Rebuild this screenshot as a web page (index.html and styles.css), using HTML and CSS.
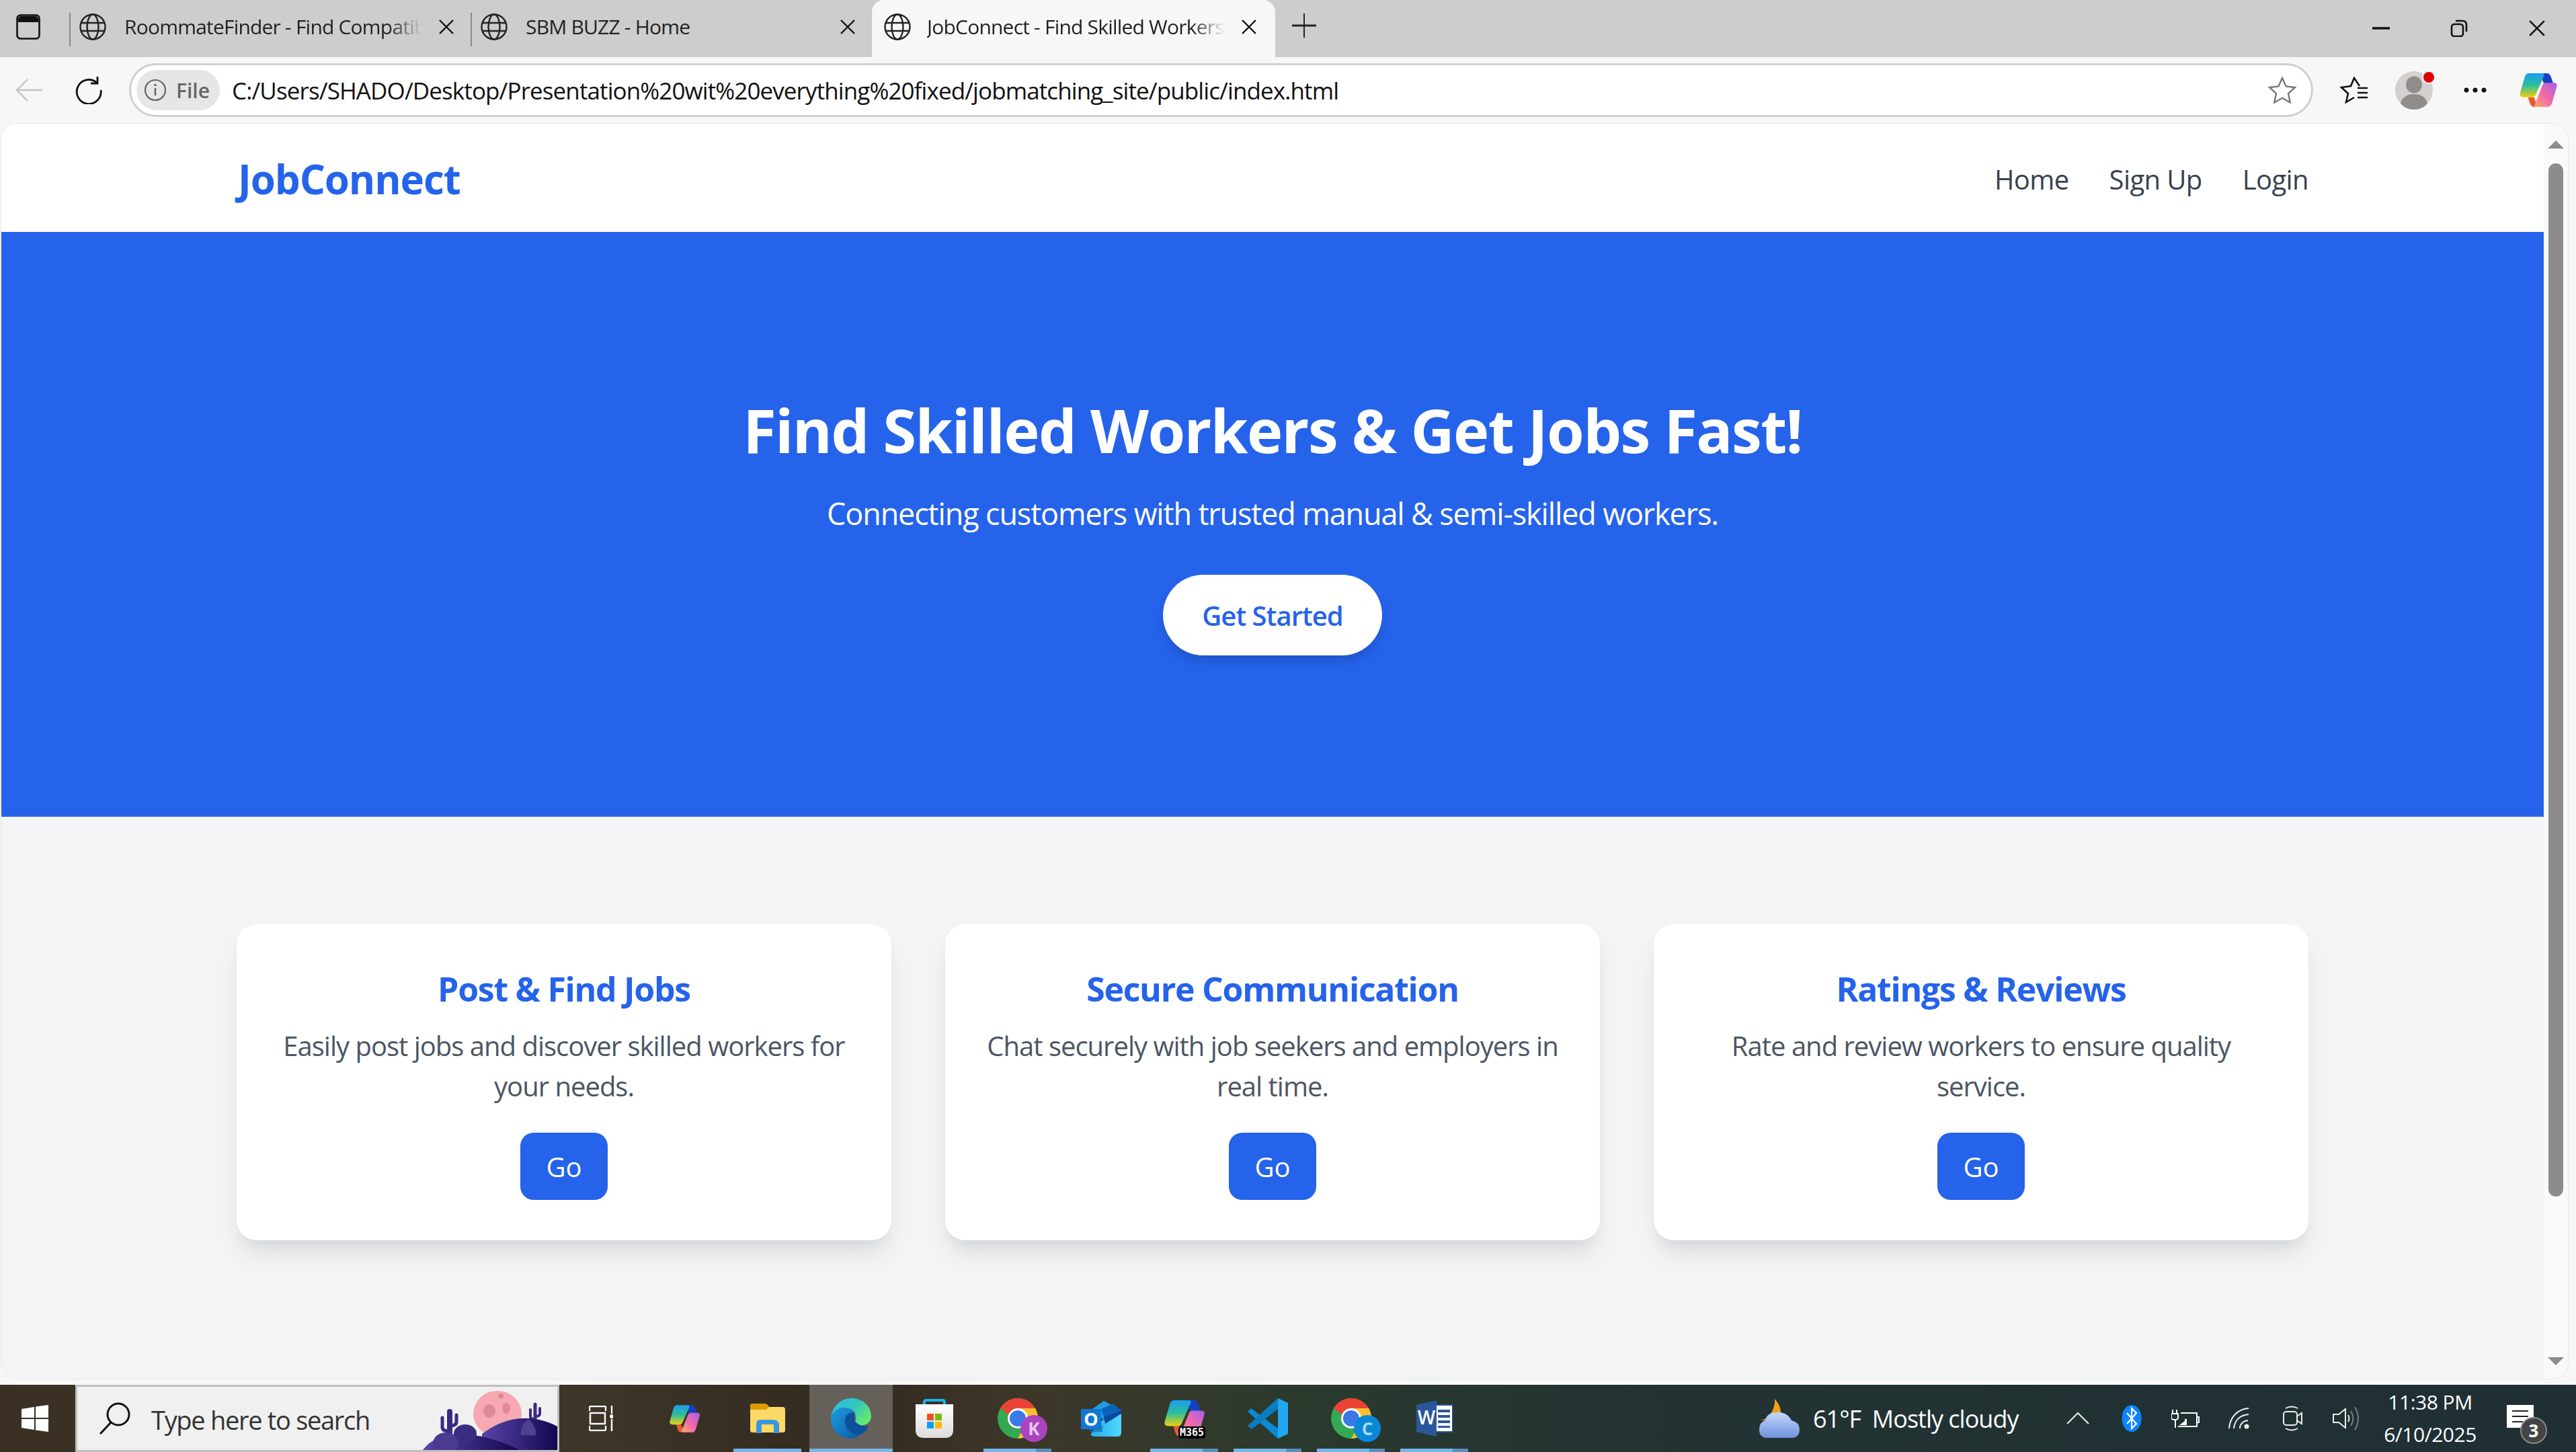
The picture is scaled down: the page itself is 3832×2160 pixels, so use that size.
FILE: index.html
```html
<!DOCTYPE html>
<html>
<head>
	<title>JobConnect - Find Skilled Workers</title>
	<meta charset="utf-8">
	<link rel="stylesheet" href="styles.css">
</head>
<body>

	<svg class="defs" width="0" height="0">
		<defs>
			<linearGradient id="cp-left" x1="0" y1="0" x2="0" y2="1">
				<stop offset="0" stop-color="#1a9cf2"/><stop offset=".5" stop-color="#2cbf9c"/><stop offset="1" stop-color="#f0d010"/>
			</linearGradient>
			<linearGradient id="cp-right" x1="1" y1="0" x2="0" y2="1">
				<stop offset="0" stop-color="#a85fe6"/><stop offset=".55" stop-color="#f26aa6"/><stop offset="1" stop-color="#ffab6b"/>
			</linearGradient>
			<linearGradient id="edge-top" x1="0" y1="0" x2="1" y2=".7">
				<stop offset="0" stop-color="#35c1f1"/><stop offset=".5" stop-color="#2fc4c0"/><stop offset="1" stop-color="#66eb6e"/>
			</linearGradient>
			<linearGradient id="edge-low" x1="0" y1="0" x2="1" y2="1">
				<stop offset="0" stop-color="#1b9de2"/><stop offset="1" stop-color="#0c59a4"/>
			</linearGradient>
			<linearGradient id="bag" x1="0" y1="0" x2="0" y2="1">
				<stop offset="0" stop-color="#ffffff"/><stop offset="1" stop-color="#dcdcdc"/>
			</linearGradient>
			<linearGradient id="ol-body" x1="0" y1="0" x2="1" y2="0">
				<stop offset="0" stop-color="#28a8ea"/><stop offset="1" stop-color="#50d9ff"/>
			</linearGradient>
			<linearGradient id="cloud" x1="0" y1="0" x2="0" y2="1">
				<stop offset="0" stop-color="#c4d8fb"/><stop offset="1" stop-color="#6f92dc"/>
			</linearGradient>
			<linearGradient id="hill" x1="0" y1="0" x2="1" y2="0">
				<stop offset="0" stop-color="#5a44a8"/><stop offset="1" stop-color="#120650"/>
			</linearGradient>

			<symbol id="globe" viewBox="0 0 40 40">
				<g fill="none" stroke="#222" stroke-width="2.4">
					<circle cx="20" cy="20" r="18.5"/>
					<ellipse cx="20" cy="20" rx="8.5" ry="18.5"/>
					<path d="M2 14h36M2 26h36"/>
				</g>
			</symbol>
			<symbol id="x" viewBox="0 0 24 24">
				<path d="M2 2l20 20M22 2L2 22" fill="none" stroke="#111" stroke-width="2.4"/>
			</symbol>
			<symbol id="copilot" viewBox="0 0 135 122">
				<path d="M72 0h26q10 0 15 12l9 26H88z" fill="#1440c4"/>
				<path d="M30 87h22l12 35H52q-10 0-15-12z" fill="#ea5a35"/>
				<path d="M34 0h48q10 0 6 10L58 78q-4 9-14 9H14Q-2 87 1 72L18 14Q22 0 34 0z" fill="url(#cp-left)"/>
				<path d="M92 35h32q14 0 10 14l-17 59q-4 14-18 14H62q-12 0-6-12L82 44q4-9 10-9z" fill="url(#cp-right)"/>
			</symbol>
			<symbol id="chrome" viewBox="0 0 60 60">
				<circle cx="30" cy="30" r="30" fill="#34a853"/>
				<path d="M30 15h26a30 30 0 0 1-26 45l12-22z" fill="#fbc02d"/>
				<path d="M4 15a30 30 0 0 1 52 0H30a15 15 0 0 0-14 9z" fill="#ea4335"/>
				<circle cx="30" cy="30" r="15" fill="#fff"/>
				<circle cx="30" cy="30" r="12" fill="#3b78e7"/>
			</symbol>
		</defs>
	</svg>

	<!-- tab strip -->
	<div class="tabstrip">
		<div class="side-btn">
			<svg width="36" height="38" viewBox="0 0 36 38"><rect x="1.5" y="1.5" width="33" height="35" rx="5" fill="none" stroke="#111" stroke-width="2.6"/><path d="M3 8q0-5 5-5h20q5 0 5 5v4H3z" fill="#111"/></svg>
		</div>
		<div class="tab tab-sep">
			<svg class="globe"><use href="#globe"/></svg>
			<span class="tab-title fade">RoommateFinder - Find Compatib</span>
			<svg class="tab-x"><use href="#x"/></svg>
		</div>
		<div class="tab tab-sep">
			<svg class="globe"><use href="#globe"/></svg>
			<span class="tab-title">SBM BUZZ - Home</span>
			<svg class="tab-x"><use href="#x"/></svg>
		</div>
		<div class="tab tab-active">
			<svg class="globe"><use href="#globe"/></svg>
			<span class="tab-title fade">JobConnect - Find Skilled Workers</span>
			<svg class="tab-x"><use href="#x"/></svg>
		</div>
		<div class="new-tab">
			<svg width="36" height="36" viewBox="0 0 36 36"><path d="M18 0v36" stroke="#222" stroke-width="2"/><path d="M0 18h36" stroke="#222" stroke-width="3"/></svg>
		</div>
		<div class="win-btns">
			<div><svg width="26" height="6" viewBox="0 0 26 6"><path d="M0 3h26" stroke="#111" stroke-width="3.5"/></svg></div>
			<div><svg width="26" height="26" viewBox="0 0 26 26" fill="none" stroke="#111" stroke-width="2.6"><rect x="2" y="7" width="17" height="18" rx="4"/><path d="M8 2h10q6 0 6 6v10"/></svg></div>
			<div><svg width="26" height="26" viewBox="0 0 24 24"><use href="#x"/></svg></div>
		</div>
	</div>

	<!-- address bar row -->
	<div class="toolbar">
		<div class="tool tool-back">
			<svg width="40" height="34" viewBox="0 0 40 34" fill="none" stroke="#c4c4c4" stroke-width="2.4"><path d="M40 17H2M18 1L2 17l16 16"/></svg>
		</div>
		<div class="tool tool-reload">
			<svg width="42" height="42" viewBox="0 0 42 42" fill="none" stroke="#111" stroke-width="2.8"><path d="M33 10A18 18 0 1 0 39 21"/><path d="M34 1v10H24"/></svg>
		</div>
		<div class="addr">
			<div class="chip">
				<svg width="34" height="34" viewBox="0 0 34 34"><circle cx="17" cy="17" r="15" fill="none" stroke="#666" stroke-width="2.2"/><path d="M17 14v11" stroke="#666" stroke-width="2.6"/><circle cx="17" cy="9.5" r="1.8" fill="#666"/></svg>
				<span>File</span>
			</div>
			<span class="url">C:/Users/SHADO/Desktop/Presentation%20wit%20everything%20fixed/jobmatching_site/public/index.html</span>
			<svg class="star" width="42" height="40" viewBox="0 0 42 40"><path d="M21 2l5.6 12.4 13.4 1.6-10 9.200 2.800 13.300L21 31.800 9.200 38.500 12 25.200 2 16l13.400-1.600z" fill="none" stroke="#777" stroke-width="2.4"/></svg>
		</div>
		<div class="tool tool-right">
			<svg width="42" height="40" viewBox="0 0 42 40" fill="none" stroke="#111" stroke-width="2.6"><path d="M29 14L21 2l-5 12-14 2 10 9-3 13 12-7"/><path d="M26 17h15M26 24h15M26 31h15"/></svg>
		</div>
		<div class="tool tool-right">
			<svg width="62" height="60" viewBox="0 0 62 60"><circle cx="30" cy="30" r="28" fill="#d2d1cf"/><ellipse cx="30" cy="22" rx="12" ry="12.500" fill="#8f8c89"/><path d="M10 50c2-10 11-14 20-14s18 4 20 14c-5 6-12 9-20 9s-15-3-20-9z" fill="#8f8c89"/><circle cx="52" cy="11" r="10" fill="#f7f7f7"/><circle cx="52" cy="11" r="8" fill="#e00000"/></svg>
		</div>
		<div class="tool tool-right">
			<svg width="34" height="8" viewBox="0 0 34 8" fill="#111"><circle cx="4" cy="4" r="3.500"/><circle cx="17" cy="4" r="3.500"/><circle cx="30" cy="4" r="3.500"/></svg>
		</div>
		<div class="tool tool-right tool-last">
			<svg width="56" height="50"><use href="#copilot"/></svg>
		</div>
	</div>

	<!-- the page itself -->
	<div class="viewport-wrap">
		<div class="viewport">
			<div class="site">
				<nav class="nav">
					<a class="logo">JobConnect</a>
					<div class="nav-links">
						<a>Home</a>
						<a>Sign Up</a>
						<a>Login</a>
					</div>
				</nav>

				<section class="hero">
					<h1>Find Skilled Workers &amp; Get Jobs Fast!</h1>
					<p>Connecting customers with trusted manual &amp; semi-skilled workers.</p>
					<button class="btn-start">Get Started</button>
				</section>

				<section class="features">
					<div class="card">
						<h3>Post &amp; Find Jobs</h3>
						<p>Easily post jobs and discover skilled workers for your needs.</p>
						<button class="btn-go">Go</button>
					</div>
					<div class="card">
						<h3>Secure Communication</h3>
						<p>Chat securely with job seekers and employers in real time.</p>
						<button class="btn-go">Go</button>
					</div>
					<div class="card">
						<h3>Ratings &amp; Reviews</h3>
						<p>Rate and review workers to ensure quality service.</p>
						<button class="btn-go">Go</button>
					</div>
				</section>
			</div>

			<div class="scrollbar">
				<div class="arrow-up"></div>
				<div class="thumb"></div>
				<div class="arrow-down"></div>
			</div>
		</div>
	</div>

	<!-- windows taskbar -->
	<div class="taskbar">
		<div class="start">
			<svg width="40" height="40" viewBox="0 0 40 40" fill="#fff"><path d="M0 6l19-3v16H0zM21 2.600L40 0v19H21zM0 21h19v16L0 34zM21 21h19v19l-19-2.600z"/></svg>
		</div>
		<div class="search">
			<svg class="search-glass" width="50" height="50" viewBox="0 0 50 50" fill="none" stroke="#111" stroke-width="3"><circle cx="30" cy="19" r="16"/><path d="M19 31L3 48"/></svg>
			<span>Type here to search</span>
			<svg class="doodle" width="200" height="94" viewBox="0 0 200 94">
				<ellipse cx="111" cy="40" rx="36" ry="34" fill="#f6a9b2"/>
				<ellipse cx="99" cy="36" rx="9" ry="10" fill="#e08a96"/>
				<ellipse cx="124" cy="32" rx="6" ry="8" fill="#e08a96"/>
				<ellipse cx="116" cy="14" rx="4" ry="4" fill="#e08a96"/>
				<ellipse cx="116" cy="60" rx="5" ry="5" fill="#e08a96"/>
				<g fill="none" stroke="#3c2a84" stroke-linecap="round">
					<path d="M40 37v40" stroke-width="8"/>
					<path d="M29 46v14q0 6 11 6M50 42v10q0 6-10 6" stroke-width="5"/>
					<path d="M167 26v32" stroke-width="5"/>
					<path d="M160 34v10q0 4 7 4M174 32v8q0 4-7 4" stroke-width="4"/>
				</g>
				<path d="M88 70q34-26 72-23 22 2 40 12v35H88z" fill="url(#hill)"/>
				<path d="M0 94q18-24 56-24 44 2 88 24z" fill="url(#hill)"/>
				<ellipse cx="63" cy="70" rx="17" ry="14" fill="#3a2c80"/>
				<ellipse cx="34" cy="84" rx="19" ry="16" fill="#4a3a90"/>
				<path d="M157 48q12 10 11 24h-22q-2-14 11-24z" fill="#4c4290"/>
			</svg>
		</div>

		<div class="slot"><svg width="36" height="38" viewBox="0 0 36 38" fill="none" stroke="#fff" stroke-width="2.400"><path d="M1 1h24M1 1v7M25 1v7M1 37h24M1 30v7M25 30v7"/><rect x="2" y="11" width="22" height="16"/><path d="M34 0v12M34 20v18"/><circle cx="34" cy="16" r="3" fill="#fff" stroke="none"/></svg></div>
		<div class="slot"><svg width="45" height="41"><use href="#copilot"/></svg></div>
		<div class="slot running">
			<svg width="52" height="44" viewBox="0 0 52 44">
				<path d="M0 4q0-4 4-4h17q4 0 7 5h20q4 0 4 4v31q0 3-4 3H4q-4 0-4-3z" fill="#ffd966"/>
				<path d="M0 9V4q0-4 4-4h17q4 0 7 5l-4 4z" fill="#dc9c00"/>
				<path d="M9 44V30q0-6 6-6h20q6 0 8 6v14h-8V31H17v13z" fill="#3b97dc"/>
			</svg>
		</div>
		<div class="slot active">
			<svg width="60" height="60" viewBox="0 0 60 60">
				<path d="M0 29C3 10 16 0 31 0c17 0 29 12 29 27 0 9-8 14-17 13-6-1-9-3-7-6 2-3 2-8-2-13C27 13 14 12 8 18c-4 3-7 7-8 11z" fill="url(#edge-top)"/>
				<path d="M0 29C3 18 12 13 22 14c8 1 13 5 14 8-9-2-16 4-15 14 1 13 14 20 23 18-4 4-9 6-15 6C12 60 0 46 0 29z" fill="url(#edge-low)"/>
				<path d="M21 36c-1-10 6-16 15-14-1 3-2 6 0 12 4 6 14 9 20 7-2 6-7 11-12 13-9 2-22-5-23-18z" fill="#0e4f9c"/>
			</svg>
		</div>
		<div class="slot">
			<svg width="58" height="58" viewBox="0 0 58 58">
				<path d="M14 13V5q0-3 3-3h24q3 0 3 3v8" fill="none" stroke="#1ab0f0" stroke-width="4"/>
				<path d="M1 8h56v38q0 12-12 12H13Q1 58 1 46z" fill="url(#bag)"/>
				<rect x="18" y="22" width="10" height="10" fill="#f25022"/><rect x="30" y="22" width="10" height="10" fill="#7fba00"/>
				<rect x="18" y="34" width="10" height="10" fill="#00a4ef"/><rect x="30" y="34" width="10" height="10" fill="#ffb900"/>
			</svg>
		</div>
		<div class="slot running split">
			<svg class="chrome" width="60" height="60"><use href="#chrome"/></svg>
			<span class="profile-badge badge-k">K</span>
		</div>
		<div class="slot">
			<svg width="60" height="53" viewBox="0 0 60 53">
				<path d="M14 50q2 3 6 3h34q6 0 6-6V14L30 30z" fill="url(#ol-body)"/>
				<path d="M14 14L34 0l26 14L36 30z" fill="#1f9fe0"/>
				<path d="M30 12l18-8 12 10-24 16z" fill="#0a63b8"/>
				<path d="M34 24l26-10v5L36 34z" fill="#0a4a9c"/>
				<path d="M8 36h24v10H14z" fill="#0d6cb8" opacity=".7"/>
				<rect x="0" y="12" width="30" height="30" rx="2" fill="#0f78d4"/>
				<text x="15" y="37" class="ol-o">O</text>
			</svg>
		</div>
		<div class="slot running split">
			<svg width="60" height="54"><use href="#copilot"/></svg>
			<span class="m365">M365</span>
		</div>
		<div class="slot running split">
			<svg width="60" height="60" viewBox="0 0 60 60">
				<path d="M0 20l5-5 40 30v15z" fill="#0a8ad6"/>
				<path d="M45 0v16L6 46l-6-5 12-11z" fill="#0a7cc4"/>
				<path d="M45 0l15 7v46l-15 7z" fill="#22a7f2"/>
			</svg>
		</div>
		<div class="slot running split">
			<svg class="chrome" width="60" height="60"><use href="#chrome"/></svg>
			<span class="profile-badge badge-c">C</span>
		</div>
		<div class="slot running split">
			<svg width="54" height="54" viewBox="0 0 54 54">
				<rect x="24" y="7" width="30" height="40" fill="#fff" stroke="#2b579a" stroke-width="2"/>
				<path d="M32 14h18v4H32zM32 22h18v4H32zM32 30h18v4H32zM32 38h18v3H32z" fill="#2b579a"/>
				<path d="M0 7L30 0v54L0 47z" fill="#2b579a"/>
				<text x="15" y="36" class="word-w">W</text>
			</svg>
		</div>

		<div class="tray">
			<div class="weather">
				<svg width="60" height="58" viewBox="0 0 60 58">
					<path d="M23 0c8 8 12 20 7 32H2c12-2 22-16 21-32z" fill="#f2a01e"/>
					<path d="M12 58Q0 58 0 45q0-10 9-13 2-12 19-12 14 0 20 12 12 3 12 13 0 13-12 13z" fill="url(#cloud)"/>
				</svg>
				<span>61°F&nbsp; Mostly cloudy</span>
			</div>
			<div class="tray-icon"><svg width="34" height="20" viewBox="0 0 34 20" fill="none" stroke="#eee" stroke-width="2"><path d="M1 18L17 2l16 16"/></svg></div>
			<div class="tray-icon">
				<svg width="30" height="40" viewBox="0 0 30 40"><ellipse cx="15" cy="20" rx="14.500" ry="20" fill="#0a84ff"/><path d="M8 12l14 16-7 7V5l7 7L8 28" fill="none" stroke="#fff" stroke-width="2.200"/></svg>
			</div>
			<div class="tray-icon">
				<svg width="42" height="30" viewBox="0 0 42 30" fill="none" stroke="#fff" stroke-width="2"><path d="M2 2v5M8 2v5M0 8h10v6q0 3-5 3t-5-3zM6 17v12"/><path d="M14 7h24v20H10M38 13h3v8h-3"/><path d="M12 25l8-6v-3h3v9z" fill="#fff" stroke="none"/></svg>
			</div>
			<div class="tray-icon">
				<svg width="32" height="32" viewBox="0 0 32 32" fill="none" stroke="#eee" stroke-width="2"><path d="M1 31C2 14 14 2 30 1M8 31c1-12 9-20 22-21M17 31c0-6 4-11 12-12"/><circle cx="27" cy="28" r="3.500" fill="#eee" stroke="none"/></svg>
			</div>
			<div class="tray-icon">
				<svg width="30" height="38" viewBox="0 0 30 38" fill="none" stroke="#eee" stroke-width="2"><rect x="1" y="9" width="20" height="20" rx="4"/><path d="M21 16l7-5v16l-7-5M4 4q9-5 18 0M4 34q9 5 18 0"/></svg>
			</div>
			<div class="tray-icon">
				<svg width="42" height="38" viewBox="0 0 42 38" fill="none" stroke="#eee" stroke-width="2"><path d="M1 13h8l10-8v28l-10-8H1z"/><path d="M23 14q3 5 0 10"/><path d="M27 8q7 11 0 22M33 2q10 17 0 34" stroke="#77807f"/></svg>
			</div>
			<div class="clock">
				<span>11:38 PM</span>
				<span>6/10/2025</span>
			</div>
			<div class="notify">
				<svg width="40" height="34" viewBox="0 0 40 34"><path d="M0 0h40v34H0z" fill="#fff"/><path d="M8 9h24M8 17h24M8 25h16" stroke="#222" stroke-width="2.200"/></svg>
				<span class="notify-count">3</span>
			</div>
		</div>
	</div>

</body>
</html>
```

FILE: styles.css
```css
*,
*:before,
*:after {
	box-sizing: border-box;
}

html,
body {
	height: 100%;
	margin: 0;
}

body {
	background-color: #f7f7f7;
	display: flex;
	flex-direction: column;
	font-family: "Open Sans", "Noto Sans", sans-serif;
	overflow: hidden;
}

/* kept out of flow, display: none would lose the gradients */
.defs {
	height: 0;
	overflow: hidden;
	position: absolute;
	width: 0;
}

svg {
	display: block;
	flex: none;
}

/**
 * Browser chrome
 */
.tabstrip {
	align-items: stretch;
	background-color: #cdcdcd;
	display: flex;
	flex: none;
	height: 85px;
}

.side-btn {
	align-items: center;
	display: flex;
	height: 80px;
	justify-content: center;
	width: 84px;
}

.tab {
	align-items: center;
	display: flex;
	height: 80px;
	margin-left: 19px;
	padding-left: 15px;
	width: 597px;
}

.tab + .tab {
	margin-left: 0;
}

.tab-sep {
	position: relative;
}

.tab-sep:before {
	background-color: #8a8a8a;
	content: "";
	height: 50px;
	left: 0;
	position: absolute;
	top: 19px;
	width: 2px;
}

.tab.tab-active {
	background-color: #f7f7f7;
	border-top-left-radius: 18px;
	border-top-right-radius: 18px;
	height: 85px;
	padding-bottom: 5px;
	padding-left: 18px;
	width: 600px;
}

.globe {
	height: 40px;
	margin-right: 27px;
	width: 40px;
}

.tab-active .globe {
	margin-right: 24px;
}

.tab-title {
	color: #222;
	flex: none;
	font-size: 30px;
	letter-spacing: -0.8px;
	margin-bottom: 2px;
	overflow: hidden;
	white-space: nowrap;
	width: 447px;
}

.fade {
	-webkit-mask-image: linear-gradient(to right, #000 88%, transparent 99%);
	mask-image: linear-gradient(to right, #000 88%, transparent 99%);
}

.tab-x {
	height: 24px;
	margin-left: 20px;
	width: 24px;
}

.new-tab {
	align-items: center;
	display: flex;
	height: 76px;
	margin-left: 25px;
}

.win-btns {
	display: flex;
	height: 84px;
	margin-left: auto;
}

.win-btns div {
	align-items: center;
	display: flex;
	justify-content: center;
	width: 116px;
}

.toolbar {
	align-items: center;
	background-color: #f7f7f7;
	display: flex;
	flex: none;
	height: 99px;
	padding-bottom: 1px;
}

.tool {
	align-items: center;
	display: flex;
	justify-content: center;
}

.tool-back {
	width: 86px;
}

.tool-reload {
	width: 92px;
}

.tool-right {
	width: 90px;
}

.tool-last {
	margin-right: 7px;
	width: 98px;
}

.addr {
	align-items: center;
	background-color: #fff;
	border: 3px solid #cfcfcf;
	border-radius: 40px;
	display: flex;
	flex: 1;
	height: 80px;
	margin-left: 14px;
	margin-right: 16px;
	padding: 0 14px 0 8px;
}

.chip {
	align-items: center;
	background-color: #e6e6e6;
	border-radius: 30px;
	color: #666;
	display: flex;
	font-size: 30px;
	font-weight: 600;
	gap: 14px;
	height: 60px;
	padding: 0 8px 0 11px;
	width: 124px;
}

.url {
	color: #111;
	font-size: 35px;
	letter-spacing: -0.9px;
	margin-left: 18px;
	white-space: nowrap;
}

.star {
	margin-left: auto;
	margin-right: 8px;
}

/**
 * The page in the viewport
 */
.viewport-wrap {
	display: flex;
	flex: 1;
	min-height: 0;
	padding: 0 12px 9px 2px;
}

.viewport {
	background-color: #f9f9f9;
	border-radius: 24px;
	box-shadow: 0 0 0 1px #e8e8e8;
	display: flex;
	flex: 1;
	overflow: hidden;
}

.site {
	background-color: #f3f4f6;
	flex: 1;
	min-width: 0;
}

.nav {
	align-items: center;
	background-color: #fff;
	display: flex;
	height: 161px;
	justify-content: space-between;
	padding: 3px 350px 0;
}

.logo {
	color: #2563eb;
	font-size: 60px;
	font-weight: 700;
	letter-spacing: -1.1px;
	padding-left: 2px;
}

.nav-links {
	color: #374151;
	display: flex;
	font-size: 40px;
	gap: 60px;
	letter-spacing: -0.6px;
}

.hero {
	background-color: #2563eb;
	color: #fff;
	height: 870px;
	padding-top: 244px;
	text-align: center;
}

.hero h1 {
	font-size: 90px;
	font-weight: 700;
	letter-spacing: -1.6px;
	line-height: 100px;
	margin: 0 0 40px;
}

.hero p {
	font-size: 45px;
	letter-spacing: -1.15px;
	line-height: 70px;
	margin: 0 0 56px;
}

button {
	border: 0;
	font-family: inherit;
}

.btn-start {
	background-color: #fff;
	border-radius: 60px;
	box-shadow: 0 10px 20px -5px rgba(0, 0, 0, 0.2);
	color: #2563eb;
	font-size: 40px;
	font-weight: 600;
	height: 120px;
	letter-spacing: -1px;
	width: 326px;
}

.features {
	display: grid;
	gap: 80px;
	grid-template-columns: repeat(3, 1fr);
	padding: 160px 350px 0;
}

.card {
	background-color: #fff;
	border-radius: 30px;
	box-shadow: 0 25px 37px -8px rgba(0, 0, 0, 0.1), 0 10px 15px -5px rgba(0, 0, 0, 0.05);
	height: 470px;
	padding: 61px 60px 60px;
	text-align: center;
}

.card h3 {
	color: #2563eb;
	font-size: 50px;
	font-weight: 700;
	letter-spacing: -1.3px;
	line-height: 70px;
	margin: 0 0 20px;
}

.card p {
	color: #4b5563;
	font-size: 40px;
	letter-spacing: -1px;
	line-height: 60px;
	margin: 0 0 39px;
}

.btn-go {
	background-color: #2563eb;
	border-radius: 20px;
	color: #fff;
	font-size: 40px;
	height: 100px;
	width: 130px;
}

.scrollbar {
	align-items: center;
	display: flex;
	flex: none;
	flex-direction: column;
	padding-top: 25px;
	position: relative;
	width: 36px;
}

.arrow-up,
.arrow-down {
	border-left: 12px solid transparent;
	border-right: 12px solid transparent;
	height: 0;
	width: 0;
}

.arrow-up {
	border-bottom: 12px solid #8c8c8c;
}

.arrow-down {
	border-top: 12px solid #8c8c8c;
	bottom: 20px;
	position: absolute;
}

.thumb {
	background-color: #8c8c8c;
	border-radius: 11px;
	height: 1537px;
	margin-top: 22px;
	width: 22px;
}

/**
 * Taskbar
 */
.taskbar {
	align-items: stretch;
	background: linear-gradient(to right, #3a3024 0%, #3d3629 22%, #332a20 33%, #3d3729 40%, #2b3a2d 50%, #233433 62%, #1f2f33 100%);
	display: flex;
	flex: none;
	height: 100px;
}

.start {
	align-items: center;
	display: flex;
	justify-content: center;
	padding-right: 8px;
	width: 112px;
}

.search {
	align-items: center;
	background-color: #f0f0f0;
	border: 3px solid #bfbfbf;
	display: flex;
	overflow: hidden;
	position: relative;
	width: 720px;
}

.search-glass {
	margin-left: 31px;
}

.search span {
	color: #333;
	font-size: 38px;
	letter-spacing: -1.3px;
	margin-left: 29px;
	padding-top: 3px;
}

.doodle {
	bottom: 0;
	position: absolute;
	right: 0;
}

.slot {
	align-items: center;
	display: flex;
	height: 100px;
	justify-content: center;
	position: relative;
	width: 124px;
}

.slot.active {
	background-color: #66605a;
}

.running:after,
.active:after {
	background-color: #76b6e8;
	bottom: 0;
	content: "";
	height: 5px;
	left: 11px;
	position: absolute;
	right: 12px;
}

.active:after {
	left: 0;
	right: 0;
}

.split:after {
	background: linear-gradient(to right, #76b6e8 77%, #5a8fb8 77%);
}

.profile-badge {
	align-items: center;
	border-radius: 50%;
	color: #e8c8f0;
	display: flex;
	font-size: 26px;
	font-weight: 700;
	height: 40px;
	justify-content: center;
	left: 66px;
	position: absolute;
	top: 45px;
	width: 40px;
}

.badge-k {
	background-color: #ac44c0;
}

.badge-c {
	background-color: #0a88d8;
	color: #a8d8f8;
}

.m365 {
	background-color: #000;
	border-radius: 4px;
	bottom: 20px;
	color: #fff;
	font-family: "DejaVu Sans Mono", monospace;
	font-size: 15px;
	font-weight: 700;
	left: 53px;
	line-height: 18px;
	padding: 0 2px;
	position: absolute;
}

.ol-o {
	fill: #fff;
	font-size: 27px;
	font-weight: 700;
	text-anchor: middle;
}

.word-w {
	fill: #fff;
	font-size: 28px;
	font-weight: 600;
	text-anchor: middle;
}

.tray {
	align-items: center;
	color: #fff;
	display: flex;
	margin-left: auto;
}

.weather {
	align-items: center;
	display: flex;
	gap: 20px;
	width: 434px;
}

.weather span {
	font-size: 36px;
	letter-spacing: -1px;
}

.tray-icon {
	align-items: center;
	display: flex;
	justify-content: center;
	width: 80px;
}

.clock {
	align-items: center;
	display: flex;
	flex-direction: column;
	font-size: 30px;
	gap: 10px;
	letter-spacing: -0.5px;
	line-height: 38px;
	width: 168px;
}

.notify {
	height: 100%;
	padding: 30px 0 0 30px;
	position: relative;
	width: 133px;
}

.notify-count {
	align-items: center;
	background-color: #444;
	border: 2px solid #888;
	border-radius: 50%;
	display: flex;
	font-size: 26px;
	font-weight: 700;
	height: 40px;
	justify-content: center;
	left: 50px;
	position: absolute;
	top: 48px;
	width: 40px;
}
```
